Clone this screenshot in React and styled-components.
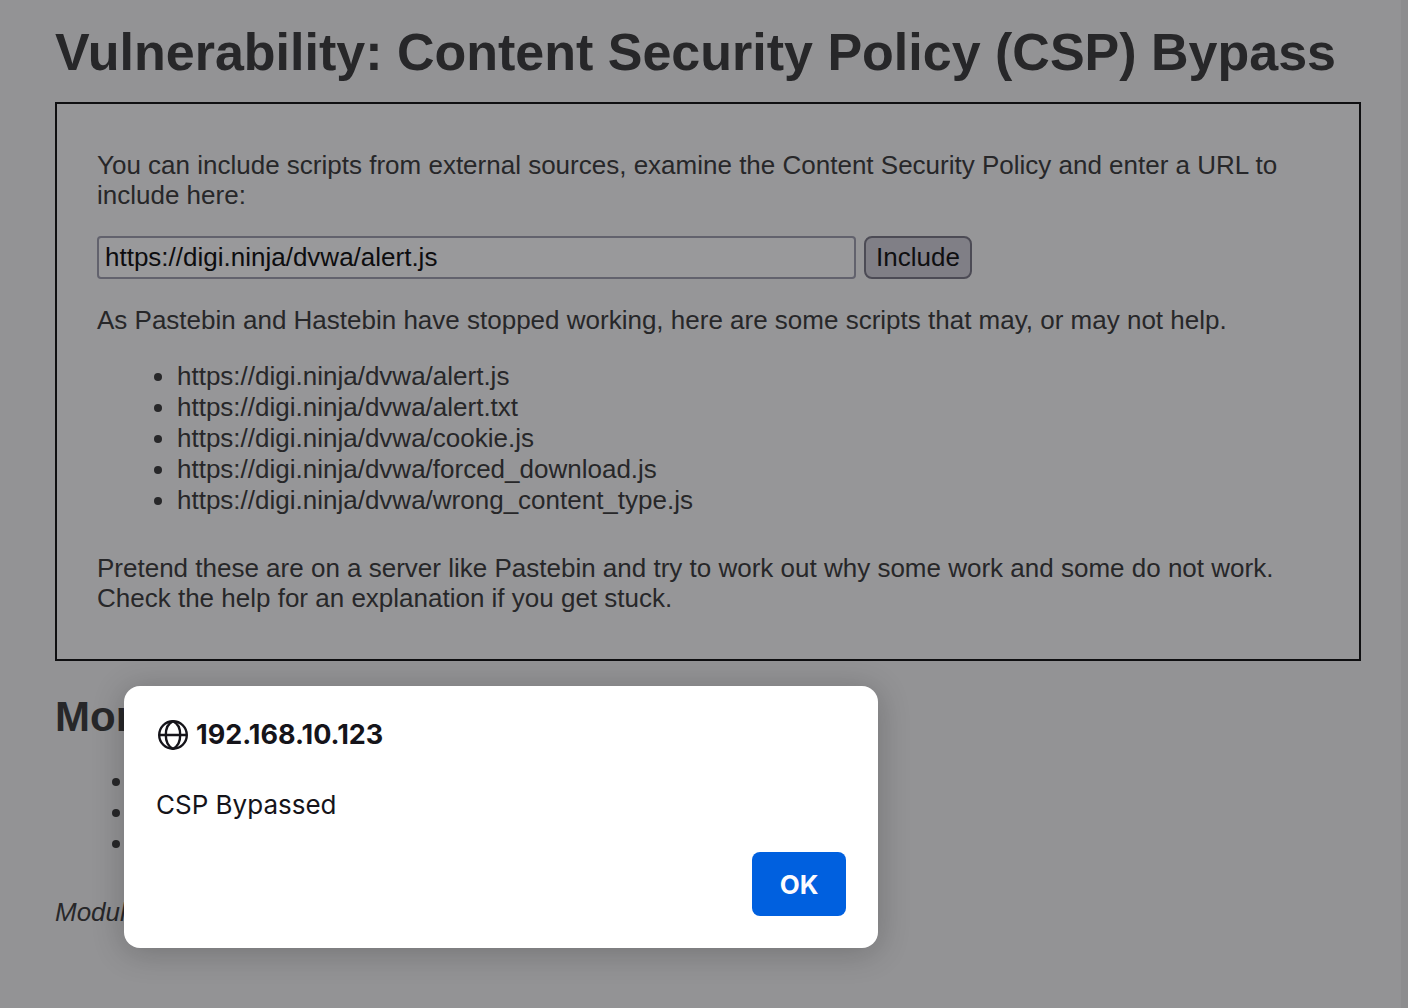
import React, { useState } from "react";
import styled, { createGlobalStyle } from "styled-components";

const GlobalStyle = createGlobalStyle`
  *, *::before, *::after { box-sizing: border-box; }
  body {
    margin: 0;
    background: #939395;
    color: #272729;
    font: 26px/30px "Liberation Sans", Arial, sans-serif;
  }
`;

const Page = styled.div`
  min-height: 100vh;
  padding: 22px 40px 22px 55px;
  border-right: 7px solid #8d8d8f;
`;

const Title = styled.h1`
  margin: 0 0 20px;
  font-size: 52px;
  line-height: 60px;
`;

const Subtitle = styled.h2`
  margin: 32px 0 25px;
  font-size: 42px;
  line-height: 48px;
`;

const Panel = styled.section`
  display: flex;
  flex-direction: column;
  gap: 26px;
  padding: 46px 40px;
  border: 2px solid #0f0f11;
  background: #969698;
`;

const Text = styled.p`
  margin: 0;
  font-style: ${(p) => (p.$italic ? "italic" : "normal")};
`;

const Form = styled.form`
  display: flex;
  gap: 8px;
`;

const UrlField = styled.input`
  flex: 0 1 759px;
  min-width: 0;
  height: 43px;
  padding: 0 6px;
  border: 2px solid #62626d;
  border-radius: 4px;
  background: #99999b;
  color: #0d0d0f;
  font: inherit;
  outline: none;
`;

const IncludeButton = styled.button`
  height: 43px;
  padding: 0 10px 2px;
  border: 2px solid #4c4b55;
  border-radius: 8px;
  background: #807f86;
  color: #0f0f11;
  font: inherit;
`;

const BulletList = styled.ul`
  margin: 0 0 ${(p) => (p.$spaced ? "38px" : "11px")};
  padding-left: 80px;
  line-height: 31px;
`;

const Dialog = styled.div`
  position: absolute;
  top: 686px;
  left: 124px;
  display: flex;
  flex-direction: column;
  width: 754px;
  max-width: calc(100vw - 148px);
  padding: 32px;
  border-radius: 16px;
  background: #fff;
  color: #15141a;
  box-shadow: 0 4px 32px rgba(12, 12, 13, 0.24);
  font-family: Inter, "Open Sans", sans-serif;
`;

const DialogHeader = styled.header`
  display: flex;
  align-items: center;
  gap: 6px;
  height: 34px;
`;

const Host = styled.h3`
  margin: 0;
  font-size: 27px;
  line-height: 34px;
  font-weight: 700;
`;

const Message = styled.p`
  margin: 36px 0 30px;
  font-size: 26px;
  line-height: 34px;
`;

const OkButton = styled.button`
  align-self: flex-end;
  width: 94px;
  height: 64px;
  padding: 2px 0 0;
  border: 0;
  border-radius: 8px;
  background: #0060df;
  color: #fbfbfe;
  font: 700 26px/34px Inter, "Open Sans", sans-serif;
`;

const Globe = () => (
  <svg width="34" height="34" viewBox="0 0 34 34" fill="none" stroke="currentColor" strokeWidth="2.4" aria-hidden="true">
    <circle cx="17" cy="17" r="13.8" />
    <path d="M3.2 17h27.6M17 3.2C12.2 5.4 9.8 11 9.8 17s2.4 11.6 7.2 13.8c4.8-2.2 7.2-7.8 7.2-13.8S21.8 5.4 17 3.2" />
  </svg>
);

const scripts = ["alert.js", "alert.txt", "cookie.js", "forced_download.js", "wrong_content_type.js"];

const references = [
  "Content Security Policy Reference",
  "Mozilla Developer Network - CSP: script-src",
  "Mozilla Security Blog - CSP for the web we have",
];

export default function App() {
  const [url, setUrl] = useState("https://digi.ninja/dvwa/alert.js");
  return (
    <>
      <GlobalStyle />
      <Page as="main">
        <Title>Vulnerability: Content Security Policy (CSP) Bypass</Title>
        <Panel>
          <Text as="label" htmlFor="script-url">
            You can include scripts from external sources, examine the Content Security Policy and enter a URL to
            include here:
          </Text>
          <Form onSubmit={(e) => e.preventDefault()}>
            <UrlField id="script-url" type="text" value={url} onChange={(e) => setUrl(e.target.value)} />
            <IncludeButton type="submit">Include</IncludeButton>
          </Form>
          <Text>As Pastebin and Hastebin have stopped working, here are some scripts that may, or may not help.</Text>
          <BulletList>
            {scripts.map((name) => (
              <li key={name}>https://digi.ninja/dvwa/{name}</li>
            ))}
          </BulletList>
          <Text>
            Pretend these are on a server like Pastebin and try to work out why some work and some do not work. Check
            the help for an explanation if you get stuck.
          </Text>
        </Panel>
        <Subtitle>More Information</Subtitle>
        <BulletList $spaced>
          {references.map((name) => (
            <li key={name}>{name}</li>
          ))}
        </BulletList>
        <Text $italic>Module developed by Digininja.</Text>
      </Page>
      <Dialog role="alertdialog" aria-labelledby="dialog-host" aria-describedby="dialog-message">
        <DialogHeader>
          <Globe />
          <Host id="dialog-host">192.168.10.123</Host>
        </DialogHeader>
        <Message id="dialog-message">CSP Bypassed</Message>
        <OkButton type="button">OK</OkButton>
      </Dialog>
    </>
  );
}
